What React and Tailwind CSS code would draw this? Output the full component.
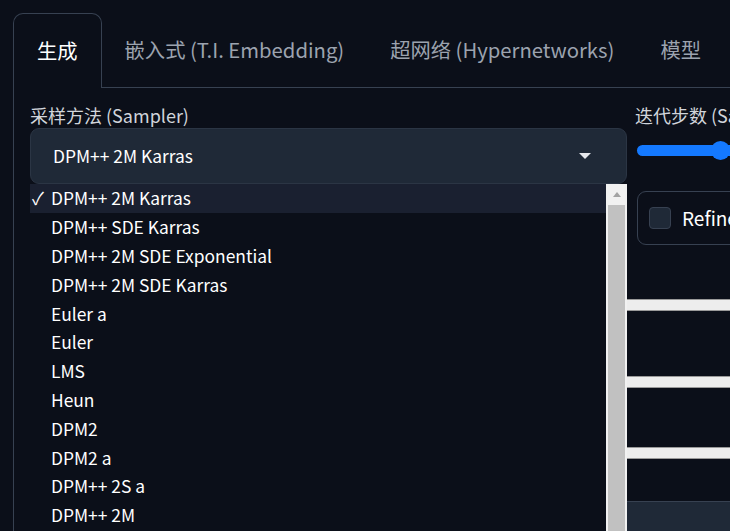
import { useState } from "react";

const FONT = { fontFamily: '"Noto Sans CJK SC", "Noto Sans", sans-serif' };

const samplers = [
    "DPM++ 2M Karras", "DPM++ SDE Karras", "DPM++ 2M SDE Exponential", "DPM++ 2M SDE Karras",
    "Euler a", "Euler", "LMS", "Heun", "DPM2", "DPM2 a", "DPM++ 2S a", "DPM++ 2M",
];

const tabs = ["生成", "嵌入式 (T.I. Embedding)", "超网络 (Hypernetworks)", "模型"];

// ── Dropdown abierto ──────────────────────────────────────────────────────
const SamplerList = ({ selected }) => (
    <div className="absolute top-[184px] left-[30px] w-[597px] bottom-0 overflow-hidden bg-[#0b0f19] flex">
        <div className="flex-1 flex flex-col">
            {samplers.map((s) => (
                <div key={s}
                    className={`h-[28.8px] shrink-0 flex items-center text-[17.4px] text-white ${s === selected ? "bg-[#1a2030]" : ""}`}>
                    <span className="w-[21px] pl-[2px]">{s === selected ? "✓" : ""}</span>
                    <span>{s}</span>
                </div>
            ))}
        </div>
        <div className="w-[21px] bg-[#f1f1f1] flex flex-col items-center">
            <div className="h-[21px] flex items-center justify-center">
                <div className="w-0 h-0 border-l-[4px] border-r-[4px] border-b-[5px] border-l-transparent border-r-transparent border-b-[#a3a3a3]" />
            </div>
            <div className="w-[17px] flex-1 bg-[#c1c1c1]" />
        </div>
    </div>
);

export default function App() {
    const [sampler] = useState("DPM++ 2M Karras");

    return (
        <div style={FONT} className="w-[730px] h-[531px] bg-[#0b0f19] overflow-hidden relative pt-[13px] pl-[13px]">
            {/* Pestañas */}
            <div className="flex h-[75px] items-stretch">
                {tabs.map((t, i) => (
                    <div key={t}
                        className={i === 0
                            ? "px-[23px] pb-[2px] flex items-center text-[20.3px] text-white border border-b-0 border-[#374151] rounded-t-[10px]"
                            : "px-[23px] pb-[2px] flex items-center text-[20.3px] text-[#9ca3af] border-b border-[#374151] whitespace-nowrap"}>
                        {t}
                    </div>
                ))}
                <div className="flex-1 border-b border-[#374151]" />
            </div>

            {/* Panel */}
            <div className="border-l border-[#374151] flex">
                <div className="w-[613px] pl-[16px] pt-[16px] shrink-0">
                    <div className="text-[18px] text-[#d1d5db] leading-[22px]">采样方法 (Sampler)</div>
                    <div className="mt-[2px] h-[56px] bg-[#1f2937] border border-[#2b3544] rounded-[9px] flex items-center justify-between pl-[22px] pr-[35px]">
                        <span className="text-[17.4px] text-white">{sampler}</span>
                        <div className="w-0 h-0 border-l-[6px] border-r-[6px] border-t-[6px] border-l-transparent border-r-transparent border-t-[#e5e7eb]" />
                    </div>
                </div>

                <div className="flex-1 flex flex-col pt-[16px]">
                    <div className="h-[22px] shrink-0 pl-[8px] text-[18px] text-[#d1d5db] leading-[22px] whitespace-nowrap">迭代步数 (Sampling steps)</div>
                    <div className="ml-[10px] mt-[14px] relative h-[20px] shrink-0 flex items-center">
                        <div className="h-[11px] w-[200px] bg-[#1479ff] rounded-full" />
                        <div className="absolute left-[74px] w-[19px] h-[19px] rounded-full bg-[#1479ff]" />
                    </div>
                    <div className="ml-[10px] mt-[31px] h-[54px] shrink-0 border border-[#374151] rounded-[9px] flex items-center pl-[11px] gap-[11px] w-[200px]">
                        <div className="w-[22px] h-[22px] bg-[#1f2937] border border-[#374151] rounded-[4px]" />
                        <span className="text-[19px] text-white">Refiner</span>
                    </div>
                    <div className="mt-[54px] h-[12px] shrink-0 bg-[#ededed] border-y border-[#9a9a9a]" />
                    <div className="mt-[65px] h-[12px] shrink-0 bg-[#ededed] border-y border-[#9a9a9a]" />
                    <div className="mt-[59px] h-[12px] shrink-0 bg-[#ededed] border-y border-[#9a9a9a]" />
                    <div className="mt-[42px] h-[40px] shrink-0 bg-[#1f2937] border-t border-[#374151]" />
                </div>
            </div>

            <SamplerList selected={sampler} />
        </div>
    );
}
